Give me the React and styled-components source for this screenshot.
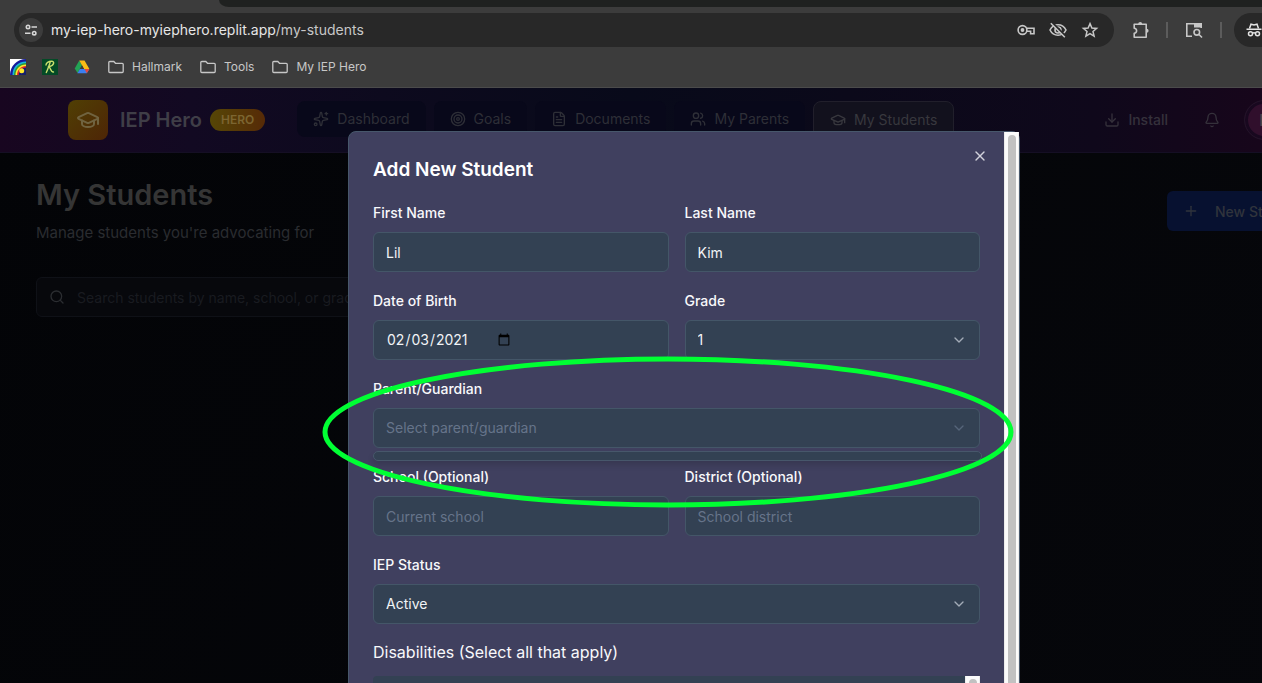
import React from "react";
import styled, { createGlobalStyle, css } from "styled-components";
import {
  Bell,
  ChevronDown,
  Download,
  FileText,
  GraduationCap,
  Plus,
  Search,
  Sparkles,
  Target,
  Users,
  X,
} from "lucide-react";

const GlobalStyle = createGlobalStyle`
  *, *::before, *::after { box-sizing: border-box; }
  body {
    margin: 0;
    background: #040508;
    font-family: Inter, "Liberation Sans", sans-serif;
    overflow: hidden;
  }
  button, input, select { font-family: inherit; }
`;

const Screen = styled.div`
  display: flex;
  flex-direction: column;
  height: 100vh;
  overflow: hidden;
`;

/* ---------- browser chrome ---------- */

const Chrome = styled.div`
  flex: none;
  background: #3c3c3c;
  border-bottom: 1px solid #4b4b4b;
  color: #c7c7c7;
`;

const TabStrip = styled.div`
  height: 7px;
  margin-left: 219px;
  background: #1f2120;
  border-bottom-left-radius: 10px 7px;
`;

const Toolbar = styled.div`
  display: flex;
  align-items: center;
  height: 46px;
  padding-left: 14px;
  overflow: hidden;
`;

const AddressBar = styled.div`
  display: flex;
  flex: 1;
  align-items: center;
  gap: 8px;
  height: 34px;
  padding: 0 14px 0 5px;
  border-radius: 17px;
  background: #282828;
`;

const SiteButton = styled.button`
  display: flex;
  align-items: center;
  justify-content: center;
  width: 24px;
  height: 24px;
  padding: 0;
  border: 0;
  border-radius: 50%;
  background: #3c3c3c;
  color: #d6d6d6;
`;

const Url = styled.div`
  flex: 1;
  font-size: 14px;
  line-height: 20px;
  color: #e6e6e6;
  white-space: nowrap;

  span { color: #c7c7c7; }
`;

const IconButton = styled.button`
  display: flex;
  flex: none;
  align-items: center;
  justify-content: center;
  padding: 0;
  border: 0;
  background: none;
  color: inherit;
`;

const AddressIcons = styled.div`
  display: flex;
  gap: 12px;
`;

const ToolbarIcons = styled.div`
  display: flex;
  align-items: center;
  gap: 16px;
  padding: 0 12px 0 18px;
`;

const Divider = styled.span`
  width: 2px;
  height: 16px;
  background: #5c5c5c;
`;

const Incognito = styled.div`
  display: flex;
  flex: none;
  align-items: center;
  width: 28px;
  height: 34px;
  padding-left: 11px;
  overflow: hidden;
  border-radius: 17px 0 0 17px;
  background: #282828;
  color: #e3e3e3;

  svg { flex: none; }
`;

const Bookmarks = styled.nav`
  display: flex;
  align-items: center;
  gap: 16px;
  height: 34px;
  padding: 0 10px 6px;
`;

const Bookmark = styled.a`
  display: flex;
  align-items: center;
  gap: 8px;
  padding-right: ${(p) => (p.$folder ? "2px" : "0")};
  color: #c7c7c7;
  font-size: 12px;
  line-height: 16px;
  text-decoration: none;
  white-space: nowrap;
`;

/* ---------- page behind the dialog ---------- */

const Viewport = styled.div`
  position: relative;
  flex: 1;
  min-height: 0;
  width: calc(100% + 106px);
  background: linear-gradient(120deg, #030407, #06070b);
`;

const Header = styled.header`
  display: flex;
  align-items: center;
  height: 65px;
  padding: 0 84px 0 68px;
  border-bottom: 1px solid #150f24;
  background: linear-gradient(90deg, #180620 0%, #120922 14%, #0d0a1e 28%, #080a1a 46%, #0b091a 62%, #0f081b 80%, #17061b 92%, #1b061b 100%);
`;

const Logo = styled.span`
  display: flex;
  align-items: center;
  justify-content: center;
  width: 40px;
  height: 40px;
  border-radius: 8px;
  background: linear-gradient(135deg, #503f04, #4e2506);
  color: #706340;
`;

const Brand = styled.div`
  margin-left: 12px;
  font-size: 20px;
  font-weight: 600;
  line-height: 28px;
  color: #3f3e47;
  white-space: nowrap;
`;

const Badge = styled.span`
  margin-left: 8px;
  padding: 0 11px;
  border-radius: 11px;
  background: linear-gradient(90deg, #564606, #562a07);
  color: #7c6531;
  font-size: 12px;
  font-weight: 600;
  line-height: 22px;
`;

const Nav = styled.nav`
  display: flex;
  align-items: flex-start;
  gap: 8px;
  margin-left: 32px;
`;

const NavLink = styled.a`
  display: flex;
  align-items: center;
  gap: 8px;
  height: 36px;
  padding: 0 16px;
  border-radius: 8px;
  background: #08081a;
  color: #2e2f37;
  font-size: 14px;
  font-weight: 400;
  line-height: 20px;
  text-decoration: none;
  white-space: nowrap;

  ${(p) =>
    p.$active &&
    css`
      height: 38px;
      border: 1px solid #211f2b;
      background: #12111d;
      color: #38383e;
    `}
`;

const Account = styled.div`
  display: flex;
  align-items: center;
  gap: 24px;
  margin-left: auto;
  color: #35313b;
`;

const InstallButton = styled(IconButton)`
  gap: 8px;
  padding-right: 12px;
  font-size: 14px;
  font-weight: 500;
  line-height: 20px;
`;

const Avatar = styled.button`
  width: 40px;
  height: 40px;
  padding: 0;
  border: 1px solid #211428;
  border-radius: 50%;
  background: #300f2c;
  box-shadow: inset 0 0 0 3px #18081f;
  color: #4a4348;
  font-size: 16px;
  font-weight: 600;
`;

const PageBody = styled.main`
  padding: 24px 36px;
`;

const PageHead = styled.div`
  display: flex;
  align-items: center;
  justify-content: space-between;
`;

const PageTitle = styled.h1`
  margin: 0;
  font-size: 29px;
  font-weight: 600;
  line-height: 36px;
  color: #353535;
`;

const PageLead = styled.p`
  margin: 8px 0 0;
  font-size: 15px;
  line-height: 24px;
  color: #2a2c30;
`;

const NewStudentButton = styled.button`
  display: flex;
  align-items: center;
  gap: 16px;
  width: 165px;
  height: 40px;
  padding: 0 16px;
  border: 0;
  border-radius: 6px;
  background: #071130;
  color: #30343c;
  font-size: 14px;
  font-weight: 500;
  white-space: nowrap;
`;

const SearchBox = styled.label`
  display: flex;
  align-items: center;
  gap: 12px;
  max-width: 448px;
  height: 40px;
  margin-top: 32px;
  padding: 0 12px;
  border: 1px solid #0f1117;
  border-radius: 6px;
  background: #07080c;
  color: #2b2d31;
`;

const SearchInput = styled.input`
  flex: 1;
  min-width: 0;
  padding: 0;
  border: 0;
  outline: 0;
  background: none;
  color: #2b2d31;
  font-size: 14px;

  &::placeholder { color: #191b20; opacity: 1; }
`;

/* ---------- dialog ---------- */

const Overlay = styled.div`
  position: absolute;
  inset: 0;
  display: flex;
  align-items: flex-start;
  justify-content: center;
  padding-top: 43px;
  overflow: hidden;
`;

const Dialog = styled.section`
  position: relative;
  display: flex;
  width: 100%;
  max-width: 672px;
  border: 1px solid #47576b;
  border-radius: 8px;
  background: #40405f;
  color: #f8f8fb;
`;

const DialogForm = styled.form`
  display: flex;
  flex: 1;
  flex-direction: column;
  gap: 16px;
  min-width: 0;
  padding: 24px;
`;

const DialogTitle = styled.h2`
  margin: 0;
  font-size: 19px;
  font-weight: 600;
  line-height: 28px;
  color: #ffffff;
`;

const CloseButton = styled(IconButton)`
  position: absolute;
  top: 16px;
  right: 31px;
  color: #d2d2dc;
`;

const ScrollTrack = styled.div`
  flex: none;
  width: 15px;
  padding: 3px;
  border: solid #ececec;
  border-width: 0 1px;
  background: #fbfbfb;
`;

const ScrollThumb = styled.div`
  width: 8px;
  height: 100%;
  margin: 0 auto;
  border-radius: 4px;
  background: #c1c1c1;
`;

const Row = styled.div`
  display: grid;
  grid-template-columns: 1fr 1fr;
  gap: 16px;
`;

const Field = styled.div`
  position: relative;
  display: flex;
  flex-direction: column;
  gap: 6px;
  min-width: 0;
`;

const Label = styled.label`
  font-size: 14px;
  font-weight: 500;
  line-height: 26px;
`;

const controlStyle = css`
  width: 100%;
  height: 40px;
  padding: 0 12px;
  border: 1px solid #445668;
  border-radius: 6px;
  outline: 0;
  background: #334153;
  color: #f1f3f6;
  font-size: 14px;
  line-height: 20px;
`;

const TextInput = styled.input`
  ${controlStyle}

  &::placeholder { color: #66748a; opacity: 1; }
`;

const DateInput = styled.input`
  ${controlStyle}
  display: flex;

  &::-webkit-datetime-edit { flex: none; }
  &::-webkit-calendar-picker-indicator { margin-inline-start: 0; }
`;

const SelectWrap = styled.div`
  position: relative;
  display: flex;
  align-items: center;

  svg {
    position: absolute;
    right: 13px;
    color: ${(p) => (p.$muted ? "#56657a" : "#a3acb8")};
    pointer-events: none;
  }
`;

const Select = styled.select`
  ${controlStyle}
  appearance: none;
  color: ${(p) => (p.$muted ? "#66748a" : "#f1f3f6")};
`;

const EmptyMenu = styled.div`
  position: absolute;
  top: 75px;
  left: 0;
  right: -2px;
  height: 10px;
  border: 1px solid #47576b;
  border-radius: 5px;
  background: #334153;
  box-shadow: 0 4px 6px rgba(0, 0, 0, 0.14);
`;

const Group = styled.fieldset`
  margin: 0;
  padding: 0;
  border: 0;
  min-width: 0;
`;

const Legend = styled.legend`
  padding: 0 0 12px;
  font-size: 16px;
  font-weight: 400;
  line-height: 24px;
`;

const OptionList = styled.div`
  display: flex;
  justify-content: flex-end;
  height: 192px;
  border-radius: 4px 0 0 4px;
  background: #334153;
`;

const Highlight = styled.svg`
  position: absolute;
  top: 223px;
  left: -27px;
  width: calc(100% + 23px);
  height: 154px;
  overflow: visible;
  pointer-events: none;
`;

/* ---------- icons ---------- */

const Stroke = ({ size = 18, children, ...rest }) => (
  <svg
    width={size}
    height={size}
    viewBox={`0 0 ${size} ${size}`}
    fill="none"
    stroke="currentColor"
    strokeWidth="1.6"
    aria-hidden="true"
    {...rest}
  >
    {children}
  </svg>
);

const TuneIcon = () => (
  <Stroke size={14}>
    <circle cx="4" cy="4" r="1.7" />
    <path d="M7.5 4H13M1 10.2h5.5" />
    <circle cx="10.2" cy="10.2" r="1.7" />
  </Stroke>
);

const KeyIcon = () => (
  <Stroke size={20}>
    <circle cx="6.500" cy="10" r="4.400" />
    <circle cx="6.500" cy="10" r="1.900" fill="currentColor" stroke="none" />
    <path d="M10.600 8.200H18v5.500h-3.400v-2.400h-4" />
  </Stroke>
);

const EyeOffIcon = () => (
  <Stroke size={20}>
    <path d="M2 10c1.600-3.300 4.600-5.200 8-5.200s6.400 1.900 8 5.200c-1.600 3.300-4.600 5.200-8 5.200S3.600 13.300 2 10z" />
    <circle cx="10" cy="10" r="3" />
    <path d="M4.300 2.800 17.500 16" stroke="#282828" strokeWidth="2" />
    <path d="M2.800 3.200 16.800 17.200" />
  </Stroke>
);

const StarIcon = () => (
  <Stroke size={20} strokeWidth="1.5">
    <path d="m10 3.600 1.900 4.400 4.700.4-3.600 3.100 1.100 4.700-4.100-2.500-4.100 2.500L7 11.500 3.400 8.400l4.700-.4z" />
  </Stroke>
);

const PuzzleIcon = () => (
  <Stroke size={18}>
    <path d="M2.200 3.300h12v12.900h-12v-3.900c3.200-.4 3.200-4.700 0-5.100z" strokeLinejoin="round" />
    <path d="M6.200 3a2 2 0 0 1 4 0zM14.600 7.700a2 2 0 0 1 0 4z" fill="currentColor" stroke="none" />
  </Stroke>
);

const TabSearchIcon = () => (
  <Stroke size={20}>
    <path d="M8 16.300H2.800V3.700h14.400V8" />
    <path d="M10 3h8v4.500h-8z" fill="currentColor" stroke="none" />
    <circle cx="12.800" cy="12.300" r="2.800" />
    <path d="m15 14.500 3 3" />
  </Stroke>
);

const IncognitoIcon = () => (
  <Stroke size={18} strokeWidth="1.5">
    <path d="M1.500 8.200h15" />
    <path d="M4.500 7.500 6 3.200l3 .8 3-.8 1.500 4.300" />
    <circle cx="5.500" cy="12.700" r="2" />
    <circle cx="12.500" cy="12.700" r="2" />
    <path d="M7.500 12.200c1-.6 2-.6 3 0" />
  </Stroke>
);

const FolderIcon = () => (
  <Stroke size={16} strokeWidth="1.3">
    <path d="M.8 3.500a1 1 0 0 1 1-1h4l1.700 1.800h6.700a1 1 0 0 1 1 1v7.200a1 1 0 0 1-1 1H1.800a1 1 0 0 1-1-1z" />
  </Stroke>
);

const RainbowIcon = () => (
  <svg width="16" height="16" viewBox="0 0 16 16" fill="none" aria-hidden="true">
    <path fill="#fff" d="M0 0h16v16H0z" />
    <path fill="#151a9c" d="M16 0C7 0 0 7 0 16h16z" />
    <path fill="#18b5d8" d="M16 2.500C8 2.500 2.500 8 2.500 16H16z" />
    <path fill="#2f9a37" d="M16 4C9 4 4 9 4 16h12z" />
    <path fill="#ffe92b" d="M16 5.500C10 5.500 5.500 10 5.500 16H16z" />
    <path fill="#e4252a" d="M16 7C11 7 7 11 7 16h9z" />
    <path fill="#17206b" d="M16 8.500c-4 0-7.300 3.500-7.300 7.500H16z" />
    <circle cx="11.700" cy="11.700" r="2.500" fill="#ffe92b" />
  </svg>
);

const ScriptIcon = () => (
  <svg width="16" height="16" viewBox="0 0 16 16" fill="none" aria-hidden="true">
    <path fill="#034a26" d="M0 0h16v16H0z" />
    <path
      d="M4 6c0-2 2.500-3.800 5.500-3.800 3.500 0 2.800 4.200-2.500 5.400 1.500 1 1.500 5.600 4.500 5.400M8.300 3C7 6.500 5.800 10.500 4.300 13.500"
      stroke="#c9e06d"
      strokeWidth="1.400"
      strokeLinecap="round"
    />
  </svg>
);

const DriveIcon = () => (
  <svg width="16" height="16" viewBox="0 0 16 16" aria-hidden="true">
    <path fill="#23a455" d="M5.300 1.500 8 6.200 3.600 14 .7 9.600z" />
    <path fill="#fbbc16" d="M5.300 1.500h5.200l4.900 8.400h-5.300z" />
    <path fill="#3b7ff0" d="M5.900 9.900h9.500l-2.600 4.400H3.400z" />
    <path fill="#e8453c" d="M10.500 9.900h4.900l-2.600 4.400z" />
    <path fill="#3c3c3c" d="m8 6.300 2 3.600H6z" />
  </svg>
);

const NAV_ITEMS = [
  { label: "Dashboard", Icon: Sparkles },
  { label: "Goals", Icon: Target },
  { label: "Documents", Icon: FileText },
  { label: "My Parents", Icon: Users },
  { label: "My Students", Icon: GraduationCap, active: true },
];

function SelectField({ id, label, options, muted, children }) {
  return (
    <Field>
      <Label htmlFor={id}>{label}</Label>
      <SelectWrap $muted={muted}>
        <Select id={id} $muted={muted}>
          {options.map((o) => (
            <option key={o}>{o}</option>
          ))}
        </Select>
        <ChevronDown size={16} aria-hidden="true" />
      </SelectWrap>
      {children}
    </Field>
  );
}

function TextField({ id, label, ...input }) {
  return (
    <Field>
      <Label htmlFor={id}>{label}</Label>
      <TextInput id={id} type="text" {...input} />
    </Field>
  );
}

function BrowserChrome() {
  return (
    <Chrome>
      <TabStrip />
      <Toolbar>
        <AddressBar>
          <SiteButton aria-label="Site information"><TuneIcon /></SiteButton>
          <Url>my-iep-hero-myiephero.replit.app<span>/my-students</span></Url>
          <AddressIcons>
            <IconButton aria-label="Passwords"><KeyIcon /></IconButton>
            <IconButton aria-label="Tracking protection"><EyeOffIcon /></IconButton>
            <IconButton aria-label="Bookmark this page"><StarIcon /></IconButton>
          </AddressIcons>
        </AddressBar>
        <ToolbarIcons>
          <IconButton aria-label="Extensions"><PuzzleIcon /></IconButton>
          <Divider />
          <IconButton aria-label="Search tabs"><TabSearchIcon /></IconButton>
          <Divider />
        </ToolbarIcons>
        <Incognito><IncognitoIcon /></Incognito>
      </Toolbar>
      <Bookmarks>
        <Bookmark href="#" aria-label="Rainbow"><RainbowIcon /></Bookmark>
        <Bookmark href="#" aria-label="Script"><ScriptIcon /></Bookmark>
        <Bookmark href="#" aria-label="Drive" $folder><DriveIcon /></Bookmark>
        <Bookmark href="#" $folder><FolderIcon />Hallmark</Bookmark>
        <Bookmark href="#" $folder><FolderIcon />Tools</Bookmark>
        <Bookmark href="#" $folder><FolderIcon />My IEP Hero</Bookmark>
      </Bookmarks>
    </Chrome>
  );
}

function AddStudentDialog() {
  return (
    <Overlay>
      <Dialog role="dialog" aria-labelledby="dialog-title">
        <DialogForm>
          <DialogTitle id="dialog-title">Add New Student</DialogTitle>
          <Row>
            <TextField id="first-name" label="First Name" defaultValue="Lil" />
            <TextField id="last-name" label="Last Name" defaultValue="Kim" />
          </Row>
          <Row>
            <Field>
              <Label htmlFor="dob">Date of Birth</Label>
              <DateInput id="dob" type="date" defaultValue="2021-02-03" />
            </Field>
            <SelectField id="grade" label="Grade" options={["1"]} />
          </Row>
          <SelectField id="guardian" label="Parent/Guardian" options={["Select parent/guardian"]} muted>
            <EmptyMenu />
          </SelectField>
          <Row>
            <TextField id="school" label="School (Optional)" placeholder="Current school" />
            <TextField id="district" label="District (Optional)" placeholder="School district" />
          </Row>
          <SelectField id="status" label="IEP Status" options={["Active"]} />
          <Group>
            <Legend>Disabilities (Select all that apply)</Legend>
            <OptionList>
              <ScrollTrack><ScrollThumb /></ScrollTrack>
            </OptionList>
          </Group>
        </DialogForm>
        <ScrollTrack><ScrollThumb /></ScrollTrack>
        <CloseButton type="button" aria-label="Close"><X size={16} /></CloseButton>
        <Highlight viewBox="0 0 693 154" preserveAspectRatio="none" aria-hidden="true">
          <ellipse cx="346" cy="77" rx="343" ry="73" fill="none" stroke="#00ff33" strokeWidth="5" />
        </Highlight>
      </Dialog>
    </Overlay>
  );
}

export default function App() {
  return (
    <Screen>
      <GlobalStyle />
      <BrowserChrome />
      <Viewport>
        <Header>
          <Logo><GraduationCap size={24} /></Logo>
          <Brand>IEP Hero</Brand>
          <Badge>HERO</Badge>
          <Nav>
            {NAV_ITEMS.map(({ label, Icon, active }) => (
              <NavLink key={label} href="#" $active={active}>
                <Icon size={16} />
                {label}
              </NavLink>
            ))}
          </Nav>
          <Account>
            <InstallButton><Download size={16} />Install</InstallButton>
            <IconButton aria-label="Notifications"><Bell size={16} /></IconButton>
            <Avatar>E</Avatar>
          </Account>
        </Header>
        <PageBody>
          <PageHead>
            <div>
              <PageTitle>My Students</PageTitle>
              <PageLead>Manage students you're advocating for</PageLead>
            </div>
            <NewStudentButton><Plus size={16} />New Student</NewStudentButton>
          </PageHead>
          <SearchBox>
            <Search size={16} />
            <SearchInput type="search" aria-label="Search students" placeholder="Search students by name, school, or grade..." />
          </SearchBox>
        </PageBody>
        <AddStudentDialog />
      </Viewport>
    </Screen>
  );
}
